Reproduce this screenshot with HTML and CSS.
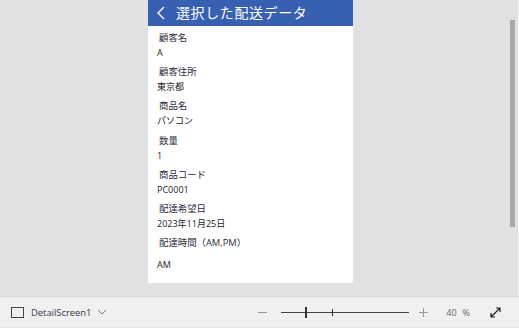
FILE: index.html
```html
<!DOCTYPE html>
<html lang="ja">
<head>
  <meta charset="UTF-8" />
  <title>DetailScreen1</title>
  <link rel="stylesheet" href="styles.css">
</head>
<body>
  <div class="studio">
    <div class="canvas">
      <div class="phone">
        <header class="app-header">
          <svg class="back" width="8" height="14" viewBox="0 0 8 14">
            <polyline points="7,1 1,7 7,13" fill="none" stroke="#fff" stroke-width="1.3"/>
          </svg>
          <h1>選択した配送データ</h1>
        </header>
        <div class="form">
          <div class="field"><div class="label">顧客名</div><div class="value">A</div></div>
          <div class="field"><div class="label">顧客住所</div><div class="value">東京都</div></div>
          <div class="field"><div class="label">商品名</div><div class="value">パソコン</div></div>
          <div class="field"><div class="label">数量</div><div class="value">1</div></div>
          <div class="field"><div class="label">商品コード</div><div class="value">PC0001</div></div>
          <div class="field"><div class="label">配達希望日</div><div class="value">2023年11月25日</div></div>
          <div class="field last"><div class="label">配達時間（AM,PM）</div><div class="value">AM</div></div>
        </div>
      </div>
    </div>
    <div class="scroll">
      <div class="thumb"></div>
    </div>
  </div>

  <footer class="statusbar">
    <div class="screen-pick">
      <span class="screen-icon"></span>
      <span class="screen-name">DetailScreen1</span>
      <svg width="10" height="6" viewBox="0 0 10 6">
        <polyline points="1,1 5,5 9,1" fill="none" stroke="#777" stroke-width="1"/>
      </svg>
    </div>
    <div class="zoom">
      <span class="minus"></span>
      <div class="slider">
        <span class="knob"></span>
        <span class="tick"></span>
      </div>
      <svg class="plus" width="9" height="9" viewBox="0 0 9 9">
        <path d="M4.5 0V9M0 4.5H9" stroke="#999" stroke-width="1"/>
      </svg>
      <span class="pct">40</span>
      <span class="pct-sign">%</span>
      <svg class="expand" width="13" height="13" viewBox="0 0 13 13">
        <path d="M2 11L11 2M7 2H11V6M2 7V11H6" fill="none" stroke="#222" stroke-width="1.2"/>
      </svg>
    </div>
  </footer>
</body>
</html>
```

FILE: styles.css
```css
body {
  margin: 0;
  width: 519px;
  height: 330px;
  overflow: hidden;
  font-family: "Open Sans", "Noto Sans CJK JP", sans-serif;
  background: #fff;
}

.studio {
  display: flex;
  height: 296px;
  background: #e2e2e2;
}

.canvas {
  flex: 1;
  padding-left: 148px;
}

.phone {
  width: 205px;
  height: 283px;
  background: #fff;
}

.app-header {
  display: flex;
  align-items: center;
  height: 26px;
  background: #3860b2;
  padding-left: 9px;
}

.back {
  margin-right: 11px;
}

.app-header h1 {
  margin: 0;
  color: #fff;
  font-size: 14px;
  font-weight: normal;
  line-height: 26px;
  letter-spacing: 0.6px;
}

.form {
  padding: 6px 0 0 9px;
}

.field {
  height: 34.2px;
}

.label {
  padding-left: 2px;
  font-size: 9.4px;
  line-height: 12px;
  color: #2b2b3b;
}

.value {
  margin-top: 3px;
  font-size: 9px;
  line-height: 12px;
  color: #222;
}

.field.last .value {
  margin-top: 10px;
}

.scroll {
  width: 9px;
  border-right: 1px solid #f7f7f7;
}

.thumb {
  margin: 20px 0 0 1px;
  width: 5px;
  height: 207px;
  background: #a9a9a9;
}

.statusbar {
  display: flex;
  align-items: center;
  justify-content: space-between;
  height: 30px;
  background: #f0f0f0;
  border-top: 1px solid #d8d8d8;
  border-bottom: 1px solid #e6e6e6;
}

.screen-pick {
  display: flex;
  align-items: center;
  padding-left: 11px;
}

.screen-icon {
  width: 11px;
  height: 9px;
  border: 1px solid #444;
  margin-right: 7px;
}

.screen-name {
  font-size: 9.4px;
  color: #3a3a4a;
  margin-right: 6px;
}

.zoom {
  display: flex;
  align-items: center;
  padding-right: 17px;
}

.minus {
  width: 9px;
  height: 1px;
  background: #999;
  margin-right: 14px;
}

.slider {
  position: relative;
  width: 128px;
  height: 1px;
  background: #444;
  margin-right: 10px;
}

.knob {
  position: absolute;
  left: 24px;
  top: -5px;
  width: 2px;
  height: 11px;
  background: #333;
}

.tick {
  position: absolute;
  left: 51px;
  top: -3px;
  width: 1px;
  height: 7px;
  background: #333;
}

.plus {
  margin-right: 18px;
}

.pct, .pct-sign {
  font-size: 9px;
  color: #666;
}

.pct-sign {
  margin-left: 6px;
  margin-right: 19px;
}
```
